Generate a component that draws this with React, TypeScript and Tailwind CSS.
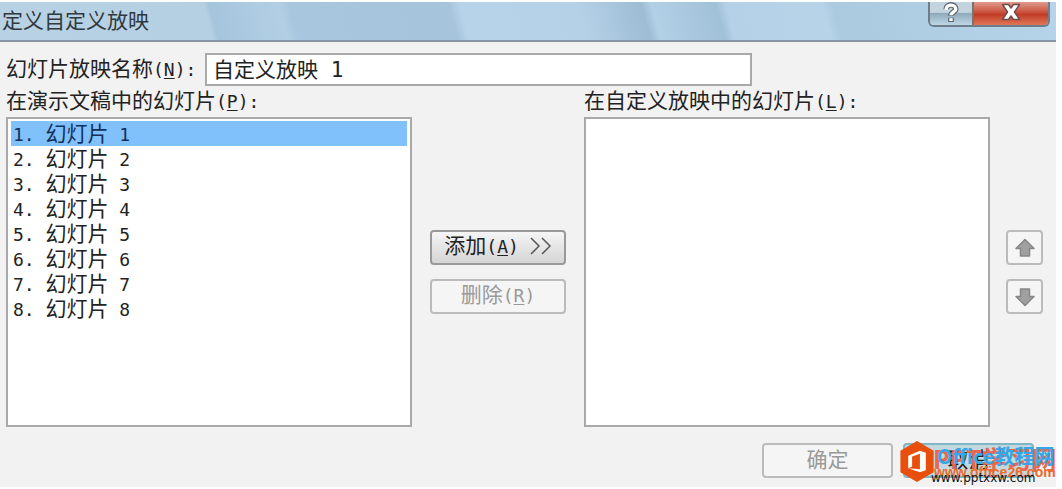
import type { ReactNode } from "react";

const slides = [1, 2, 3, 4, 5, 6, 7, 8];

const listBox =
  "h-[310px] border-2 border-[#a9a9a9] bg-white px-[3px] py-[2px] text-[#222]";

const button =
  "flex h-[35px] items-center justify-center rounded-[4px] border-2 whitespace-pre";

const disabledButton = "border-[#bbb] bg-[#f5f5f5] text-[#999]";

function Latin({ children }: { children: ReactNode }) {
  return (
    <span className="font-['DejaVu_Sans_Mono',monospace] text-[18px] whitespace-pre">
      {children}
    </span>
  );
}

function AccessKey({ letter }: { letter: string }) {
  return (
    <Latin>
      (<u className="underline-offset-2">{letter}</u>)
    </Latin>
  );
}

function ArrowIcon({ down = false }: { down?: boolean }) {
  return (
    <svg
      viewBox="0 0 20 20"
      className={down ? "size-5 rotate-180" : "size-5"}
      fill="#a0a0a0"
      stroke="#868686"
      strokeWidth="1.5"
      strokeLinejoin="round"
      aria-hidden="true"
    >
      <path d="M10 1.5 19 10.500H14.500V18H5.500V10.500H1Z" />
    </svg>
  );
}

function TitleBar() {
  return (
    <header className="flex h-[40px] items-start justify-between border-b-2 border-[#8595a4] bg-[linear-gradient(75deg,#b8d2e4_0%,#b5d0e3_20%,#a5c5dd_20.5%,#b2cfe4_27%,#a8c7de_28%,#a6c5dc_43%,#b7d3e9_44%,#b5d1e8_55%,#9dbdd4_61%,#b2d0e6_62%,#a1c1d8_68%,#b4d1e7_69%,#b6d3e8_78%,#abcae0_79%,#b5d3e9_100%)] pl-[2px]">
      <h1 className="pt-[2px] text-[21px] leading-[30px] text-[#303840]">定义自定义放映</h1>
      <div className="mr-[6px] flex h-[25px] overflow-hidden rounded-b-[6px] border-2 border-t-0 border-[#6e7d88]">
        <button
          aria-label="帮助"
          className="flex w-[44px] items-center justify-center border-r-2 border-[#77736f] bg-linear-to-b from-[#c3d4df] from-45% via-[#91aabb] via-50% to-[#bdd7e6] pb-[2px]"
        >
          <svg viewBox="0 0 20 22" className="h-[21px] w-[20px]" fill="none" aria-hidden="true">
            <path d="M5 7.500C5 1.500 15 1.500 15 7.500C15 10.500 10 10.500 10 14.500M10 16.500V21" stroke="#5e6670" strokeWidth="6" />
            <path d="M5 8.500V7C5.500 2 15 2 15 7.500C15 10.500 10 10.500 10 14M10 17V20" stroke="#fff" strokeWidth="3.500" />
          </svg>
        </button>
        <button
          aria-label="关闭"
          className="flex w-[74px] items-center justify-center bg-linear-to-b from-[#df9a8d] via-[#c23c26] via-55% to-[#df7558] pb-[4px]"
        >
          <svg viewBox="0 0 20 18" className="h-[18px] w-[20px]" fill="#fff" stroke="#70504d" strokeWidth="1.500" strokeLinejoin="round" aria-hidden="true">
            <path d="M1.500 1.500H7.500L10 5 12.500 1.500H18.500L13.500 9 18.500 16.500H12.500L10 13 7.500 16.500H1.500L6.500 9Z" />
          </svg>
        </button>
      </div>
    </header>
  );
}

function Watermark() {
  return (
    <div className="absolute top-[-3px] right-0 flex">
      <svg viewBox="0 0 36 44" className="z-10 h-[43px] w-[36px]" aria-hidden="true">
        <path d="M18 1 35 11V33L18 43 1 33V11Z" fill="#e84f0d" />
        <path d="M9 16 21 11 27 13V31L21 33 9 29 21 30V14L13 17V27L9 29Z" fill="#fff" />
      </svg>
      <div className="relative -ml-[8px] h-[48px] w-[129px] font-bold whitespace-nowrap">
        <span className="absolute top-[3px] left-[6px] text-[25px] leading-[30px] text-[#e9664f]">PPT学习网</span>
        <span className="absolute top-[3px] left-[10px] text-[20px] leading-[26px] text-[#35a7e8]">Office教程网</span>
        <span className="absolute top-[24px] left-[7px] font-['Liberation_Sans',sans-serif] text-[14px] leading-[16px] text-[#ec6b2b]">www.office26.com</span>
        <span className="absolute top-[31px] left-[4px] font-['DejaVu_Sans',sans-serif] text-[12px] leading-[14px] font-normal text-[#111]">www.pptxxw.com</span>
      </div>
    </div>
  );
}

export default function App() {
  return (
    <div className="bg-white pt-[2px] pr-[6px] font-['Noto_Sans_CJK_SC',sans-serif] text-[21px] leading-[26px] text-[#222]">
      <main className="bg-[#f2f2f2] pb-[9px]">
        <TitleBar />

        <div className="flex items-center pt-[11px] pl-[6px]">
          <label htmlFor="show-name" className="w-[199px] shrink-0 pb-[2px] whitespace-nowrap">
            幻灯片放映名称<AccessKey letter="N" /><Latin>:</Latin>
          </label>
          <input
            id="show-name"
            defaultValue="自定义放映 1"
            className="h-[33px] w-[547px] border-2 border-[#a9a9a9] bg-white px-[6px] pb-[4px] font-['DejaVu_Sans_Mono','Noto_Sans_CJK_SC',monospace] text-[21px]"
          />
        </div>

        <div className="flex pr-[13px] pl-[6px]">
          <section className="w-[406px]">
            <h2 id="source-label" className="pb-[2px]">
              在演示文稿中的幻灯片<AccessKey letter="P" /><Latin>:</Latin>
            </h2>
            <ul role="listbox" aria-labelledby="source-label" className={listBox}>
              {slides.map((n) => (
                <li
                  key={n}
                  role="option"
                  aria-selected={n === 1}
                  className={`h-[25px] pl-[2px] leading-[22px] ${n === 1 ? "bg-[#80c0fb] text-[#12305a]" : ""}`}
                >
                  <Latin>{`${n}. `}</Latin>幻灯片<Latin>{` ${n}`}</Latin>
                </li>
              ))}
            </ul>
          </section>

          <div className="mx-[18px] flex w-[136px] flex-col gap-[14px] pt-[144px]">
            <button className={`${button} border-[#999] bg-linear-to-b from-[#f5f5f5] to-[#d5d5d5] pb-[4px]`}>
              <span>
                添加<AccessKey letter="A" />
              </span>
              <Latin>{" "}</Latin>
              <svg viewBox="0 0 22 18" className="h-[18px] w-[22px]" fill="none" stroke="#555" strokeWidth="1.500" aria-hidden="true">
                <path d="M1 1 9 9 1 17M12 1 20 9 12 17" />
              </svg>
            </button>
            <button disabled className={`${button} ${disabledButton} pb-[4px]`}>
              <span>
                删除<AccessKey letter="R" />
              </span>
            </button>
          </div>

          <section className="w-[406px]">
            <h2 id="target-label" className="pb-[2px]">
              在自定义放映中的幻灯片<AccessKey letter="L" /><Latin>:</Latin>
            </h2>
            <ul role="listbox" aria-labelledby="target-label" className={listBox} />
          </section>

          <div className="ml-auto flex flex-col gap-[14px] pt-[144px]">
            <button disabled aria-label="上移" className={`${button} ${disabledButton} w-[37px]`}>
              <ArrowIcon />
            </button>
            <button disabled aria-label="下移" className={`${button} ${disabledButton} w-[37px]`}>
              <ArrowIcon down />
            </button>
          </div>
        </div>

        <footer className="relative mt-[16px] flex justify-end gap-[10px] pr-[22px]">
          <button disabled className={`${button} ${disabledButton} w-[131px] pb-[6px]`}>
            确定
          </button>
          <button className={`${button} w-[131px] border-[#7fb6c5] bg-[#c3d9e0] pb-[6px]`}>取消</button>
          <Watermark />
        </footer>
      </main>
    </div>
  );
}
